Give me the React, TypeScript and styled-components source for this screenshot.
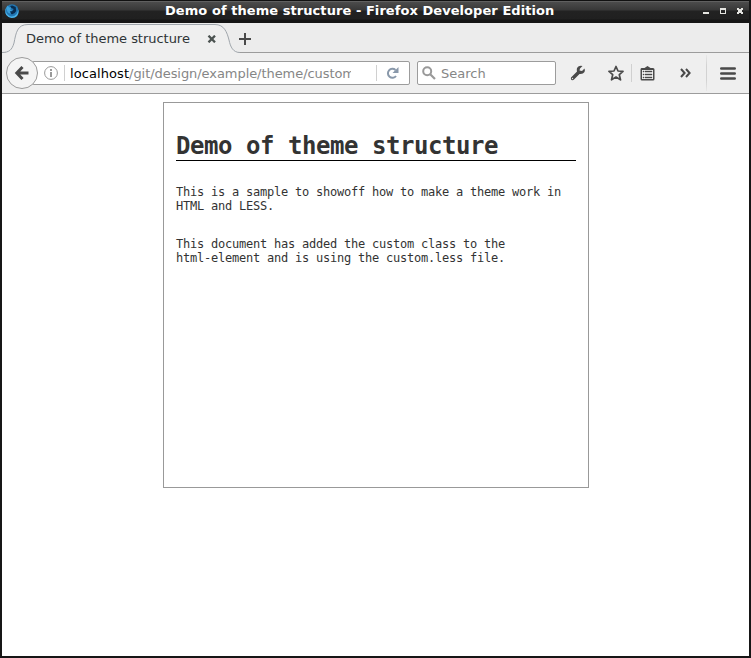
import React from 'react';
import styled, { createGlobalStyle } from 'styled-components';

const GlobalStyle = createGlobalStyle`
  *, *::before, *::after { box-sizing: border-box; }
  html, body { margin: 0; padding: 0; background: #fff; }
  body { overflow: hidden; }
`;

const BrowserWindow = styled.div`
  display: flex;
  flex-direction: column;
  width: 751px;
  height: 658px;
  border: solid #161616;
  border-width: 0 2px 2px;
  background: #fff;
  font: 13px/16px 'DejaVu Sans', sans-serif;
  color: #2e3436;
`;

const TitleBar = styled.header`
  display: flex;
  align-items: center;
  flex: none;
  height: 23px;
  padding: 0 6px 2px 2px;
  background: linear-gradient(
    #111 0 1px, #606060 1px 2px, #4c4c4c 2px, #383838 10px,
    #222 11px, #202020 19px, #151515 20px, #151515 23px
  );
`;

const WindowTitle = styled.h1`
  flex: 1;
  margin: 0;
  padding-left: 145px;
  font: bold 13px/16px 'DejaVu Sans', sans-serif;
  letter-spacing: 0.06px;
  color: #fff;
  white-space: nowrap;
`;

const WindowControls = styled.div`
  display: flex;
  gap: 11px;
  margin-top: 1px;
`;

const Icon = styled.svg`
  display: block;
  flex: none;
`;

const TabStrip = styled.nav`
  display: flex;
  flex: none;
  height: 30px;
  background: #ececec;
  border-bottom: 1px solid #9c9c9c;
`;

const Tab = styled.div`
  position: relative;
  display: flex;
  align-items: center;
  width: 236px;
  height: 30px;
  padding: 2px 0 0 24px;
`;

const TabShape = styled.svg`
  position: absolute;
  left: 0;
  top: 0;
`;

const TabLabel = styled.span`
  position: relative;
  width: 181px;
  letter-spacing: -0.03px;
  white-space: nowrap;
`;

const TabClose = styled(Icon)`
  position: relative;
`;

const NewTab = styled(Icon)`
  margin: 10px 0 0 1px;
`;

const Toolbar = styled.div`
  display: flex;
  flex: none;
  align-items: center;
  height: 41px;
  padding-left: 4px;
  background: #efefef;
  border-bottom: 1px solid #9c9c9c;
`;

const BackButton = styled.div`
  z-index: 1;
  display: flex;
  flex: none;
  align-items: center;
  justify-content: center;
  width: 32px;
  height: 32px;
  border: 1px solid #9c9c9c;
  border-radius: 50%;
  background: #f4f4f4;
`;

const Field = styled.div<{ $width: number }>`
  display: flex;
  flex: none;
  align-items: center;
  width: ${(p) => p.$width}px;
  height: 24px;
  border: 1px solid #9c9c9c;
  border-radius: 2px;
  background: #fff;
`;

const AddressField = styled(Field)`
  margin-left: -6px;
  padding-left: 11px;
`;

const SearchField = styled(Field)`
  margin-left: 7px;
  padding-left: 4px;
  gap: 5px;
  color: #868686;
`;

const SearchHint = styled.span`
  padding-top: 2px;
`;

const Divider = styled.i<{ $height: number; $indent?: number }>`
  flex: none;
  width: 1px;
  height: ${(p) => p.$height}px;
  margin-left: ${(p) => p.$indent ?? 0}px;
  background: #d0d0d0;
`;

const MenuDivider = styled(Divider)`
  background: linear-gradient(#e8e8e8, #d2d2d2 30%, #d2d2d2 70%, #e8e8e8);
`;

const Address = styled.span`
  width: 282px;
  margin: 0 25px 0 5px;
  padding-top: 2px;
  overflow: hidden;
  color: #868686;
  letter-spacing: -0.06px;
  white-space: nowrap;

  b { font-weight: normal; letter-spacing: 0.08px; color: #000; }
`;

const Tools = styled.div`
  display: grid;
  flex: 1;
  grid-template-columns: 44px 31px 1px 31px 43px 1px 42px;
  align-items: center;
  justify-items: center;

  & > :nth-child(2) { justify-self: end; margin-right: 7px; }
`;

const Page = styled.main`
  flex: 1;
  padding: 8px 0 0 161px;
  background: #fff;
`;

const Card = styled.article`
  width: 426px;
  height: 386px;
  padding: 28px 12px 0;
  border: 1px solid #999;
  color: #333;
  font: 12px/14px 'DejaVu Sans Mono', monospace;
`;

const Heading = styled.h2`
  height: 30px;
  margin: 0 0 24px;
  border-bottom: 1px solid #000;
  font: bold 24px/31px 'DejaVu Sans Mono', monospace;
  letter-spacing: -0.448px;
  white-space: nowrap;
`;

const Paragraph = styled.p`
  margin: 0 0 24px;
  letter-spacing: -0.224px;
  white-space: nowrap;
`;

const DeveloperLogo = () => (
  <Icon width="16" height="16" viewBox="0 0 16 16">
    <circle cx="8" cy="8" r="6.7" fill="#2277b4" />
    <path d="M2.2 5Q1.2 10 4.2 12Q8.2 15.5 12.7 11L14.6 6.5Q15.2 15 7.7 15Q.2 14 1.5 6Z" fill="#4ab4ea" />
    <path d="M6.2 3L8.2 2.5L11.7 4L12.2 8Q10.2 12 7.2 11L5.2 8.5L8.2 8.2L9.7 6L7.2 5Z" fill="#082d50" />
    <path d="M2.2 5L3.7 2.5L5.2 4.5L7.2 4.5L6.2 6.5L8.2 7.5L5.7 8.5L7.2 10.5Q3.2 11 2.2 5" fill="#3aa0dc" />
  </Icon>
);

const App = () => (
  <>
    <GlobalStyle />
    <BrowserWindow>
      <TitleBar>
        <DeveloperLogo />
        <WindowTitle>Demo of theme structure - Firefox Developer Edition</WindowTitle>
        <WindowControls>
          <Icon width="6" height="6" shapeRendering="crispEdges"><path d="M0 4h6v2H0z" fill="#e4e4e0" /></Icon>
          <Icon width="6" height="6" shapeRendering="crispEdges"><path d="M0 0h6v6H0zM1 2v3h4V2z" fill="#e4e4e0" fillRule="evenodd" /></Icon>
          <Icon width="6" height="6" shapeRendering="crispEdges"><path d="M0 0h2v1h2V0h2v2H5v2h1v2H4V5H2v1H0V4h1V2H0z" fill="#e4e4e0" /></Icon>
        </WindowControls>
      </TitleBar>
      <TabStrip>
        <Tab>
          <TabShape width="240" height="30" viewBox="0 0 240 30">
            <path d="M0 29.5C7 29.5 10 27 12 20C14 10 15 1.5 26 1.5H213C222 1.5 225 9 227 17C228.5 24 231 29.5 238 29.5V30H0Z" fill="#efefef" />
            <path d="M0 29.5C7 29.5 10 27 12 20C14 10 15 1.5 26 1.5H213C222 1.5 225 9 227 17C228.5 24 231 29.5 238 29.5" fill="none" stroke="#a0a6ac" />
          </TabShape>
          <TabLabel>Demo of theme structure</TabLabel>
          <TabClose width="10" height="8" viewBox="0 0 10 8">
            <path d="M1.5 .7L8 7.3M8 .7L1.5 7.3" stroke="#4c5351" strokeWidth="2.3" />
          </TabClose>
        </Tab>
        <NewTab width="12" height="12" shapeRendering="crispEdges"><path d="M5 0h2v5h5v2H7v5H5V7H0V5h5z" fill="#4a4a4a" /></NewTab>
      </TabStrip>
      <Toolbar>
        <BackButton>
          <Icon width="16" height="16" viewBox="0 0 16 16"><path d="M8.5 2L2.8 8L8.5 14M3 8H14.5" fill="none" stroke="#4a4a4a" strokeWidth="3" /></Icon>
        </BackButton>
        <AddressField $width={378}>
          <Icon width="14" height="14" viewBox="0 0 14 14">
            <circle cx="7" cy="7" r="6.4" fill="none" stroke="#999" />
            <path d="M6 3h2v2H6zM6 6h2v5H6z" fill="#999" />
          </Icon>
          <Divider $height={16} $indent={6} />
          <Address><b>localhost</b>/git/design/example/theme/custom</Address>
          <Divider $height={16} />
          <Icon width="32" height="14" viewBox="0 0 32 14">
            <path d="M19 10A4.5 4.5 0 1 1 18.5 4" fill="none" stroke="#8998aa" strokeWidth="2" />
            <path d="M21.5 1v6h-6z" fill="#8998aa" />
          </Icon>
        </AddressField>
        <SearchField $width={139}>
          <Icon width="14" height="14" viewBox="0 0 14 14">
            <circle cx="5.2" cy="5.2" r="4" fill="none" stroke="#999" strokeWidth="2" />
            <path d="M8.2 8.2L13 13" stroke="#999" strokeWidth="2.2" />
          </Icon>
          <SearchHint>Search</SearchHint>
        </SearchField>
        <Tools>
          <Icon width="16" height="16" viewBox="0 0 16 16">
            <path d="M12.5 1Q9 0 7 3Q6.5 5 7 6.5L1 12.5Q.5 14 1.5 15Q3 15.5 4 14.5L9.5 9Q13 9.5 14.5 7Q15.3 5 14.5 3.5L12 6L9.5 5.5L10 3.5Z" fill="#4a4a4a" />
            <circle cx="2.5" cy="13.5" r=".7" fill="#ddd" />
          </Icon>
          <Icon width="16" height="16" viewBox="0 0 16 16"><path d="M8 1.5L10 6L15 6.4L11.3 9.7L12.5 14.8L8 12L3.5 14.8L4.7 9.7L1 6.4L6 6Z" fill="none" stroke="#4a4a4a" strokeWidth="1.7" strokeLinejoin="round" /></Icon>
          <Divider $height={18} />
          <Icon width="15" height="15" viewBox="0 0 15 15">
            <path d="M1.5 2H4.5L7.5 0L10.5 2H13Q14.5 2 14.5 3.5V13Q14.5 14.5 13 14.5H2Q.5 14.5 .5 13V3.5Q.5 2 1.5 2Z" fill="#4a4a4a" />
            <path d="M2 4h11v9H2z" fill="#efefef" shapeRendering="crispEdges" />
            <path d="M3 5h1v1H3zM5 5h7v1H5zM3 8h1v1H3zM5 8h7v1H5zM3 11h1v1H3zM5 11h7v1H5z" fill="#4a4a4a" stroke="#4a4a4a" strokeWidth=".4" />
          </Icon>
          <Icon width="13" height="10" viewBox="-2 0 13 10"><path d="M1 1L4.6 5L1 9M6 1L9.6 5L6 9" fill="none" stroke="#4a4a4a" strokeWidth="2" /></Icon>
          <MenuDivider $height={36} />
          <Icon width="16" height="13" viewBox="0 0 16 13"><path d="M1.3 1.5h13.4M1.3 6.5h13.4M1.3 11.5h13.4" stroke="#4a4a4a" strokeWidth="2.6" strokeLinecap="round" /></Icon>
        </Tools>
      </Toolbar>
      <Page>
        <Card>
          <Heading>Demo of theme structure</Heading>
          <Paragraph>This is a sample to showoff how to make a theme work in<br />HTML and LESS.</Paragraph>
          <Paragraph>This document has added the custom class to the<br />html-element and is using the custom.less file.</Paragraph>
        </Card>
      </Page>
    </BrowserWindow>
  </>
);

export default App;
